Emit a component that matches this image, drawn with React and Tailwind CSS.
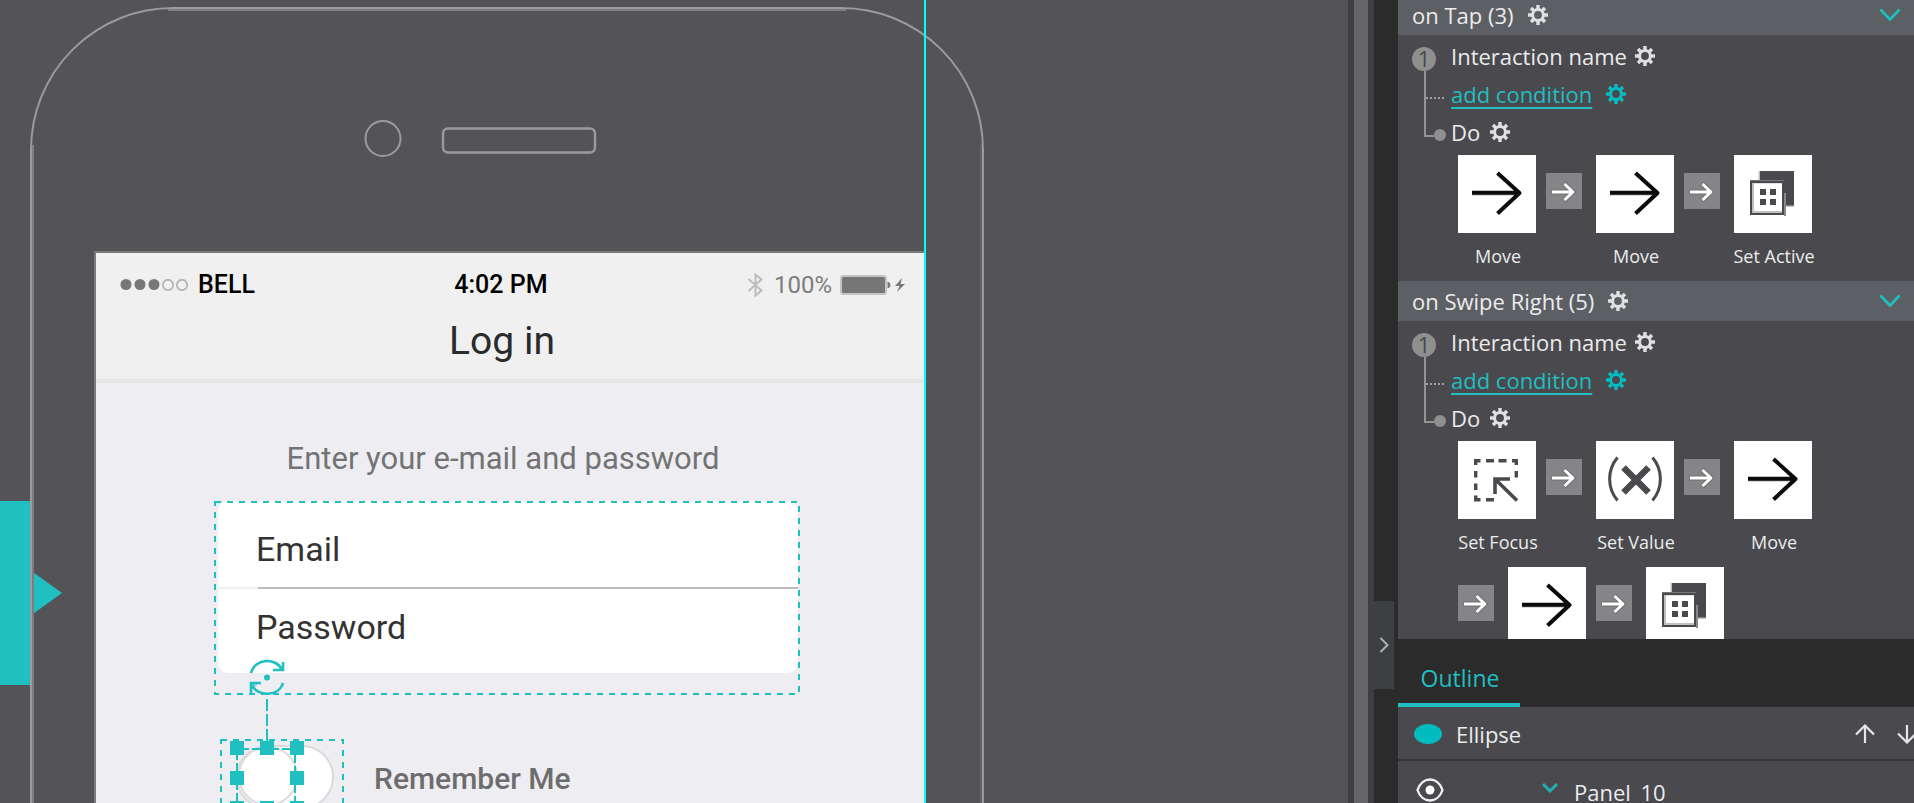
import React from 'react';

const GearIcon = ({ className = 'text-[#e0e0e0]' }) => (
  <svg viewBox="0 0 20 20" className={`size-5 ${className}`} fill="none" stroke="currentColor" aria-hidden="true">
    <circle cx="10" cy="10" r="5.4" strokeWidth="3" />
    <path
      strokeWidth="3.4"
      d="M10 0v4M10 16v4M0 10h4M16 10h4M3 3l2.8 2.8M14.2 14.2L17 17M3 17l2.8-2.8M14.2 5.8L17 3"
    />
  </svg>
);

const GearButton = ({ label, className }) => (
  <button type="button" aria-label={label} className="shrink-0">
    <GearIcon className={className} />
  </button>
);

const MoveIcon = () => (
  <svg viewBox="0 0 78 78" className="size-full" fill="none" stroke="#0b0b0b" strokeWidth="4" aria-hidden="true">
    <path d="M14 39h48" stroke="#b4b4b4" strokeWidth="3" />
    <path d="M14 37.8h48M39.5 18l22 20-22 20.500" strokeLinejoin="round" />
  </svg>
);

const SetActiveIcon = () => (
  <svg viewBox="0 0 78 78" className="size-full" aria-hidden="true">
    <rect x="24.500" y="16" width="35.500" height="36" fill="#c0c0c2" />
    <rect x="26" y="16" width="34" height="34.500" fill="#49494e" />
    <path d="M16 25h34v2H16z" fill="#77777b" />
    <rect x="50" y="38" width="2" height="23" fill="#88888c" />
    <rect x="16" y="26" width="34" height="34" fill="#49494e" />
    <rect x="18" y="28" width="30" height="30" fill="#c0c0c2" />
    <rect x="20" y="28.500" width="28" height="27.500" fill="#fff" />
    <path d="M26 34h6v6h-6zM36 34h6v6h-6zM26 44h6v6h-6zM36 44h6v6h-6z" fill="#49494e" />
  </svg>
);

const SetFocusIcon = () => (
  <svg viewBox="0 0 78 78" className="size-full" fill="none" stroke="#49494e" aria-hidden="true">
    <path
      strokeWidth="3.400"
      d="M17.700 24v-4.300H22.500M28 19.700h8M40.500 19.700h8M54 19.700h4.300V24M58.300 30v6.500M17.700 30v6.500M17.700 42.500v6.500M17.700 54.500v4.300H22.500M28 58.800h8"
    />
    <path strokeWidth="3.600" d="M52 38H37v15M37 38l22 21.500" />
  </svg>
);

const SetValueIcon = () => (
  <svg viewBox="0 0 78 78" className="size-full" fill="none" stroke="#49494e" aria-hidden="true">
    <path strokeWidth="3" d="M21.500 16.500C11 29 11 47 21.500 59.500M56.500 16.500C67 29 67 47 56.500 59.500" />
    <path strokeWidth="6.500" d="M27.500 26.500L52.500 51.500M52.500 26.500L27.500 51.500" />
  </svg>
);

const icons = {
  Move: MoveIcon,
  'Set Active': SetActiveIcon,
  'Set Focus': SetFocusIcon,
  'Set Value': SetValueIcon,
};

const Tile = ({ name, labelled }) => {
  const Icon = icons[name];
  return (
    <button type="button" aria-label={name} className="mr-[10px] flex w-[78px] flex-col items-center">
      <span className="size-[78px] bg-white">
        <Icon />
      </span>
      {labelled && <span className="h-[48px] pl-[2px] text-[18px] leading-[46px] whitespace-nowrap">{name}</span>}
    </button>
  );
};

const Then = () => (
  <span className="mt-[18px] mr-[14px] size-9 shrink-0 bg-[#858588]">
    <svg viewBox="0 0 36 36" className="size-full" fill="none" aria-hidden="true">
      <path d="M5.500 19h21M18 10.500l9 8.500-9 8.500" stroke="#707073" strokeWidth="5" />
      <path d="M6 19h21M18.500 11l8.500 8-8.500 8" stroke="#fff" strokeWidth="3" strokeLinejoin="round" />
    </svg>
  </span>
);

const Tree = () => (
  <svg viewBox="0 0 39 114" className="h-[114px] w-[39px] shrink-0" fill="none" aria-hidden="true">
    <circle cx="12" cy="22" r="12" fill="#8f8f8f" />
    <text x="12" y="30" textAnchor="middle" fontSize="22" fill="#49494e" className="font-['Open_Sans',sans-serif]">
      1
    </text>
    <path d="M13 34v65h9" stroke="#949494" strokeWidth="2" />
    <path d="M14 61h18" stroke="#a0a0a0" strokeWidth="2" strokeDasharray="2 2" />
    <circle cx="28" cy="98" r="6" fill="#8f8f8f" />
  </svg>
);

const Group = ({ title, count, actions }) => (
  <section>
    <header className="flex h-10 items-center gap-[14px] bg-[#5c5f63] pr-[13px] pl-[14px]">
      <h2 className="text-[22px] leading-10">
        {title} ({count})
      </h2>
      <GearButton label={`${title} settings`} />
      <button type="button" aria-label={`Collapse ${title}`} className="ml-auto">
        <svg viewBox="0 0 22 14" className="h-[14px] w-[22px]" fill="none" stroke="#20bfc0" strokeWidth="2.600" aria-hidden="true">
          <path d="M1.500 1.500L11 11.500l9.500-10" />
        </svg>
      </button>
    </header>
    <div className="flex pt-[2px] pl-[14px]">
      <Tree />
      <div className="text-[22px] leading-[38px]">
        <div className="flex items-center gap-2">
          Interaction name
          <GearButton label="Interaction settings" />
        </div>
        <div className="flex items-center gap-[14px] text-[#20bfc0]">
          <a href="#condition" className="underline decoration-2 underline-offset-4">
            add condition
          </a>
          <GearButton label="Condition settings" className="text-[#06bcc0]" />
        </div>
        <div className="flex items-center gap-[10px]">
          Do
          <GearButton label="Action settings" />
        </div>
      </div>
    </div>
    <div className="flex flex-wrap items-start pt-1 pr-14 pl-[60px]">
      {actions.map((name, i) => (
        <React.Fragment key={i}>
          {i > 0 && <Then />}
          <Tile name={name} labelled={i < 3} />
        </React.Fragment>
      ))}
    </div>
  </section>
);

const SelectionFrame = () => (
  <svg className="pointer-events-none absolute inset-0 size-full" fill="none" aria-hidden="true">
    <rect
      x="1"
      y="1"
      className="h-[calc(100%-2px)] w-[calc(100%-2px)]"
      stroke="#20bfc0"
      strokeWidth="2"
      strokeDasharray="6 6"
    />
  </svg>
);

const StatusBar = () => (
  <div className="flex items-center justify-between pt-4 pr-[20px] pl-6 text-[25px] leading-8">
    <div className="flex items-center gap-2 font-medium text-black">
      <svg viewBox="0 0 70 12" className="h-3 w-[70px]" aria-hidden="true">
        <circle cx="6" cy="5.500" r="5.500" fill="#777" />
        <circle cx="20" cy="5.500" r="5.500" fill="#777" />
        <circle cx="34" cy="5.500" r="5.500" fill="#777" />
        <circle cx="48" cy="6" r="5.200" fill="none" stroke="#b5b5b5" strokeWidth="1.800" />
        <circle cx="62" cy="6" r="5.200" fill="none" stroke="#b5b5b5" strokeWidth="1.800" />
      </svg>
      BELL
    </div>
    <div className="font-medium text-black">4:02 PM</div>
    <div className="flex items-center gap-2 text-[24px] text-[#7d7d7d]">
      <svg viewBox="0 0 17 24" className="mr-[2px] h-6 w-[17px]" fill="none" stroke="#bdbdbd" strokeWidth="2" aria-hidden="true">
        <path d="M1.500 6L14.500 17.500 8.500 22.500v-21l6 5L1.500 18" />
      </svg>
      <span>100%</span>
      <svg viewBox="0 0 66 22" className="h-[22px] w-[66px]" aria-hidden="true">
        <rect x="1" y="2" width="45" height="18" rx="2.500" fill="#777" stroke="#c4c4c4" strokeWidth="2" />
        <path d="M47.500 7.500c4 1 4 6 0 7z" fill="#777" />
        <path d="M62 4l-7 8h4.500L57 18l8-8h-4.500z" fill="#777" />
      </svg>
    </div>
  </div>
);

const Handle = ({ className }) => <span className={`absolute size-[14px] bg-[#20bfc0] ${className}`} />;

const LoginScreen = () => (
  <div className="absolute top-[251px] left-[94px] h-[1470px] w-[832px] border-t-2 border-l-2 border-[#7b7878] bg-[#eeeef2] font-['Roboto',sans-serif]">
    <header className="border-b-4 border-[#e5e5e5] bg-[#f0f0f0] pb-[14px]">
      <StatusBar />
      <h1 className="mt-4 pr-[18px] text-center text-[39px] leading-[48px] text-[#2b2b2b]">Log in</h1>
    </header>
    <p className="pt-14 pr-4 text-center text-[31px] leading-10 text-[#737373]">Enter your e-mail and password</p>

    <form className="relative mt-[22px] ml-[118px] h-[194px] w-[586px] pr-[2px] pl-1">
      <div className="flex h-[172px] flex-col overflow-hidden rounded-[10px] bg-white text-[34px] text-[#333]">
        <input
          type="text"
          aria-label="Email"
          defaultValue="Email"
          className="h-[86px] w-full bg-transparent pt-[9px] pl-[38px] outline-none"
        />
        <div className="h-[2px] bg-[#eeeef2] pl-10">
          <div className="h-full bg-[#bdbdbd]" />
        </div>
        <input
          type="text"
          aria-label="Password"
          defaultValue="Password"
          className="h-[84px] w-full bg-transparent pb-[9px] pl-[38px] outline-none"
        />
      </div>
      <SelectionFrame />
    </form>

    <label className="mt-[44px] ml-[124px] flex items-center gap-[30px] text-[30px] leading-10 font-medium text-[#6d6d6d]">
      <span className="relative block h-[80px] w-[124px] px-[10px] py-[6px] pl-4">
        <input type="checkbox" className="sr-only" />
        <span className="block h-16 w-full rounded-full border-2 border-[#d9d9d9] bg-white">
          <span className="-mt-px block size-[60px] rounded-full border-2 border-[#dcdcdc] bg-white" />
        </span>
        <SelectionFrame />
        <svg viewBox="0 0 76 152" className="absolute -top-20 left-[9px] h-[152px] w-[76px]" fill="none" stroke="#20bfc0" strokeWidth="2" aria-hidden="true">
          <path d="M38 40v42" strokeDasharray="12 3" />
          <path d="M22 14C26 -1.500 48 -1.500 53 11M54 24C50 38 28 38 23 26" strokeWidth="2.600" />
          <path d="M44 11h10V3M32 24H22v10" strokeWidth="2.600" />
          <path d="M22 24l8 0-8 8z" fill="#20bfc0" stroke="none" opacity="0.500" />
          <circle cx="38" cy="18.500" r="3" fill="#20bfc0" stroke="none" />
          <rect x="8" y="90" width="58" height="60" strokeDasharray="12 3" />
        </svg>
        <Handle className="top-[2px] left-[10px]" />
        <Handle className="top-[2px] left-[40px]" />
        <Handle className="top-[2px] left-[70px]" />
        <Handle className="top-[32px] left-[10px]" />
        <Handle className="top-[32px] left-[70px]" />
        <Handle className="top-[62px] left-[10px]" />
        <Handle className="top-[62px] left-[40px]" />
        <Handle className="top-[62px] left-[70px]" />
      </span>
      Remember Me
    </label>
  </div>
);

const Canvas = () => (
  <main className="relative min-w-0 flex-1 overflow-hidden bg-[#545358]">
    <div className="absolute top-[501px] left-0 h-[184px] w-[30px] bg-[#20bfc0]" />
    <svg viewBox="0 0 32 46" className="absolute top-[570px] left-[30px] h-[46px] w-8" aria-hidden="true">
      <path d="M0 0l32 23L0 46z" fill="#20bfc0" />
    </svg>
    <svg viewBox="0 0 956 1900" className="absolute top-[7px] left-[30px] h-[1900px] w-[956px]" fill="none" aria-hidden="true">
      <path d="M138 3H816M3 138V1750" stroke="#7d7c80" strokeWidth="2" />
      <path d="M951 138V1750" stroke="#656468" strokeWidth="2" />
      <rect x="1" y="1" width="952" height="1890" rx="142" stroke="#9b9a9d" strokeWidth="2" />
      <circle cx="353" cy="131.500" r="17.500" stroke="#9b9a9d" strokeWidth="2" />
      <rect x="413" y="121.500" width="152" height="24" rx="5" stroke="#9b9a9d" strokeWidth="2.400" />
    </svg>
    <LoginScreen />
    <div className="absolute inset-y-0 left-[924px] w-[2px] bg-[#00ffff]" />
  </main>
);

const Outline = () => (
  <section className="shrink-0">
    <nav className="flex h-[68px] bg-[#2b2b2b]">
      <button type="button" className="w-[122px] border-b-4 border-[#20bfc0] pt-[14px] pl-[2px] text-center text-[23px] text-[#20bfc0]">
        Outline
      </button>
    </nav>
    <div className="flex h-[54px] items-center border-b-2 border-[#37373a] pt-[2px] pl-4 text-[22px]">
      <svg viewBox="0 0 28 20" className="mr-[14px] h-5 w-7" aria-hidden="true">
        <ellipse cx="14" cy="10" rx="14" ry="10" fill="#00bcc0" />
      </svg>
      <span className="flex-1">Ellipse</span>
      <button type="button" aria-label="Move up" className="shrink-0">
        <svg viewBox="0 0 20 20" className="size-5" fill="none" stroke="#e6e6e6" strokeWidth="2.200" aria-hidden="true">
          <path d="M10 19V2M1 10.500l9-9 9 9" />
        </svg>
      </button>
      <button type="button" aria-label="Move down" className="-mr-[3px] ml-[22px] shrink-0">
        <svg viewBox="0 0 20 20" className="size-5" fill="none" stroke="#e6e6e6" strokeWidth="2.200" aria-hidden="true">
          <path d="M10 1v17M1 9.500l9 9 9-9" />
        </svg>
      </button>
    </div>
    <div className="-mb-5 flex h-[62px] items-center pl-[18px] text-[22px]">
      <button type="button" aria-label="Toggle visibility" className="mb-1">
        <svg viewBox="0 0 28 24" className="h-6 w-7" aria-hidden="true">
          <path d="M1.500 12C6-2 22-2 26.500 12 22 26 6 26 1.500 12z" fill="none" stroke="#f0f0f0" strokeWidth="2.400" />
          <circle cx="14" cy="12" r="4.500" fill="#fff" />
        </svg>
      </button>
      <button type="button" aria-label="Collapse Panel_10" className="mb-2 ml-[98px]">
        <svg viewBox="0 0 16 10" className="h-[10px] w-4" fill="none" stroke="#20aeb0" strokeWidth="3" aria-hidden="true">
          <path d="M1 1l7 7 7-7" />
        </svg>
      </button>
      <span className="ml-4">Panel_10</span>
    </div>
  </section>
);

export default function App() {
  return (
    <div className="flex h-screen overflow-hidden bg-[#49494e] font-['Open_Sans',sans-serif] text-[#ececec]">
      <Canvas />
      <div className="w-[26px] shrink-0 border-x-[6px] border-[#3e3f43] bg-[#666668]" />
      <div className="flex w-6 shrink-0 flex-col bg-[#2b2b2b] pt-[601px]">
        <button type="button" aria-label="Collapse panel" className="flex h-[88px] w-5 items-center bg-[#3e3f43] pl-[5px]">
          <svg viewBox="0 0 10 16" className="h-4 w-[10px]" fill="none" stroke="#b0b0b2" strokeWidth="2" aria-hidden="true">
            <path d="M1.500 1l7 7-7 7" />
          </svg>
        </button>
      </div>
      <aside className="flex w-[516px] shrink-0 flex-col">
        <div className="min-h-0 flex-1 overflow-hidden">
          <div className="-mt-[5px]">
            <Group title="on Tap" count={3} actions={['Move', 'Move', 'Set Active']} />
            <Group
              title="on Swipe Right"
              count={5}
              actions={['Set Focus', 'Set Value', 'Move', 'Move', 'Set Active']}
            />
          </div>
        </div>
        <Outline />
      </aside>
    </div>
  );
}
